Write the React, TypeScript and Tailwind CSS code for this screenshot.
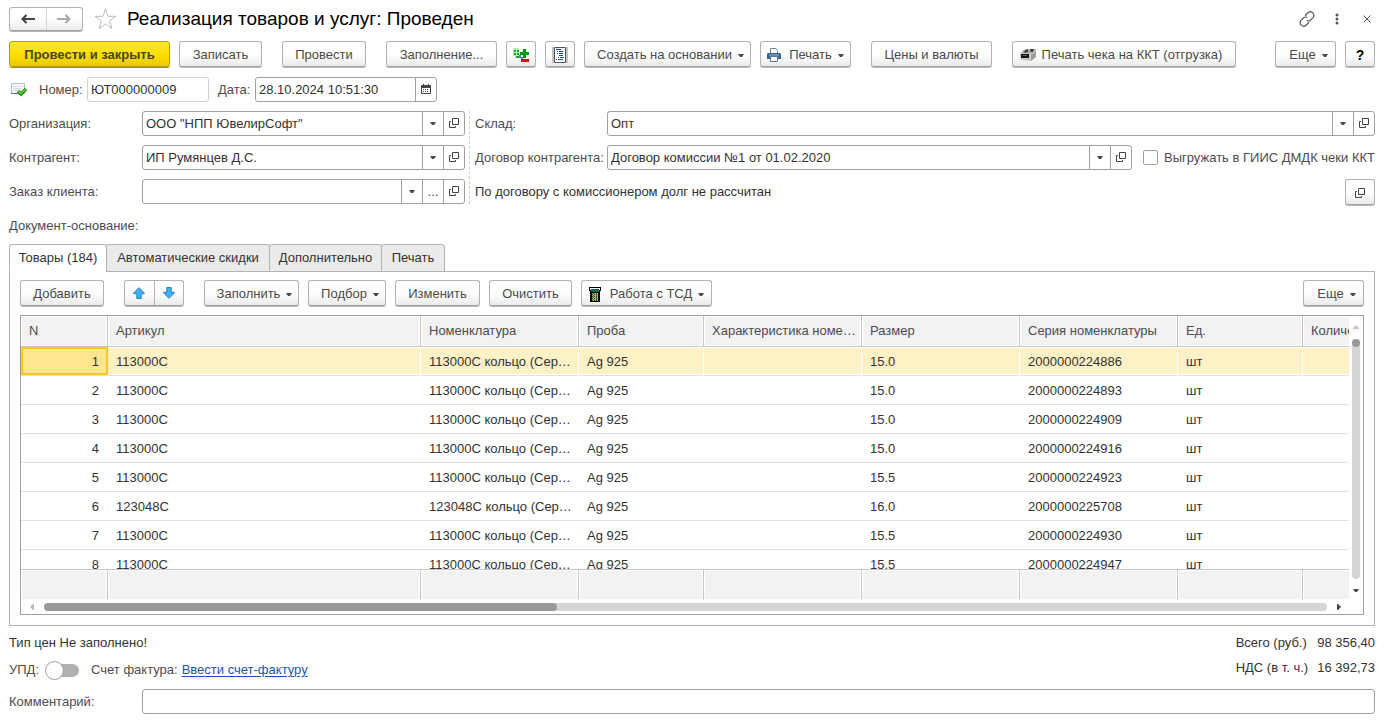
import React from "react";
import clsx from "clsx";

const columns = [
  { title: "N", width: "w-[87px]" },
  { title: "Артикул", width: "w-[313px]" },
  { title: "Номенклатура", width: "w-[158px]" },
  { title: "Проба", width: "w-[125px]" },
  { title: "Характеристика номе…", width: "w-[158px]" },
  { title: "Размер", width: "w-[158px]" },
  { title: "Серия номенклатуры", width: "w-[158px]" },
  { title: "Ед.", width: "w-[125px]" },
  { title: "Количество", width: "w-[120px]" },
];

const rows = [
  { article: "113000С", size: "15.0", series: "2000000224886" },
  { article: "113000С", size: "15.0", series: "2000000224893" },
  { article: "113000С", size: "15.0", series: "2000000224909" },
  { article: "113000С", size: "15.0", series: "2000000224916" },
  { article: "113000С", size: "15.5", series: "2000000224923" },
  { article: "123048С", size: "16.0", series: "2000000225708" },
  { article: "113000С", size: "15.5", series: "2000000224930" },
  { article: "113000С", size: "15.5", series: "2000000224947" },
];

const tabs = [
  { title: "Товары (184)", width: "w-[98px]" },
  { title: "Автоматические скидки", width: "w-[164px]" },
  { title: "Дополнительно", width: "w-[113px]" },
  { title: "Печать", width: "w-[64px]" },
];

const raised =
  "border border-[#b3b3b3] border-b-[#a0a0a0] bg-linear-to-b from-white from-50% to-[#ebebeb] shadow-[0_1px_0_#b8b8b8]";

function Button({
  className,
  children,
  ...props
}: React.ButtonHTMLAttributes<HTMLButtonElement>) {
  return (
    <button
      type="button"
      className={clsx(
        "flex h-[26px] shrink-0 items-center justify-center rounded-[3px] pt-0.5 whitespace-nowrap text-[#4a4a4a]",
        raised,
        className,
      )}
      {...props}
    >
      {children}
    </button>
  );
}

function Caret() {
  return (
    <svg width="6" height="3" viewBox="0 0 6 3" className="shrink-0">
      <path d="M0 0h6L4 3H2z" fill="#4a4a4a" />
    </svg>
  );
}

function OpenIcon() {
  return (
    <svg width="10" height="10" viewBox="0 0 10 10" fill="none" stroke="#444">
      <path d="M3.5.5h6v6h-6zM2 3.5H.5v6h6V8" />
    </svg>
  );
}

function ArrowIcon({ right, color }: { right?: boolean; color: string }) {
  return (
    <svg width="14" height="10" viewBox="0 0 14 10" className={clsx(right && "rotate-180")}>
      <path d="M5.5 1 1.500 5l4 4M1.500 5H14" fill="none" stroke={color} strokeWidth="2.200" />
    </svg>
  );
}

function MoveIcon({ down }: { down?: boolean }) {
  return (
    <svg width="12" height="12" viewBox="0 0 12 12" className={clsx(down && "rotate-180")}>
      <path d="M6 .7 11.3 6v.7H8.2v4.8H3.8V6.7H.7V6z" fill="#3fb2f2" stroke="#2b7fb8" />
    </svg>
  );
}

function AddRemoveIcon() {
  return (
    <svg width="16" height="16" viewBox="0 0 16 16">
      <path d="M0 1h6v10H2V9H0z" fill="#b5efb5" />
      <path d="M1 3h2v2H1zM4 3h2v2H4zM1 6h2v2H1zM4 6h2v2H4zM3 9h3v2H3z" fill="#18a52c" />
      <path d="M10 2h3v3h3v3h-3v3h-3V8H7V5h3z" fill="#009a08" />
      <path d="M6 8h2v2h2v2H8v-1H6z" fill="#3e83d0" />
      <path d="M8 12h8v3H8z" fill="#f00014" />
    </svg>
  );
}

function SheetIcon() {
  return (
    <svg width="16" height="16" viewBox="0 0 16 16">
      <path d="M0 0h2v16H0zM14 0h2v16h-2z" fill="#c4c4c4" />
      <path d="M2.500.5h11v15h-11z" fill="#fff" stroke="#555" />
      <path
        d="M4 2.500h5M5 4.500h1m1 0h4M5 6.500h1m1 0h4M7 8.500h4M6 10.500h1m1 0h4M4 12.500h1m1 0h5"
        stroke="#0b5583"
      />
    </svg>
  );
}

function PrinterIcon() {
  return (
    <svg width="14" height="14" viewBox="0 0 14 14">
      <path d="M3.500 5.500v-5h5l2 2v3" fill="#fff" stroke="#6c8096" />
      <path d="M1 5h12l1 1v5H0V6z" fill="#386590" />
      <path d="M2 7h10" stroke="#9cb6cf" />
      <path d="M3.500 8.500h7v5h-7z" fill="#fff" stroke="#5a7896" />
    </svg>
  );
}

function CashRegisterIcon() {
  return (
    <svg width="16" height="13" viewBox="0 0 16 13">
      <path d="M0 5 4 1l12-1v7l-5 5-10-1z" fill="#c9c6bd" />
      <path d="M4 1 15 0l-3 4H1z" fill="#aaa8a2" />
      <path d="m5 1 3-1v3L4 4zM10 0h4l-1 3h-2z" fill="#3d4249" />
      <path d="M1 5h8v4H1z" fill="#151515" />
      <path d="m11 6 5-4v6l-5 4z" fill="#a09d94" />
      <path d="M3 6.500h4" stroke="#666" />
    </svg>
  );
}

function TerminalIcon() {
  return (
    <svg width="12" height="15" viewBox="0 0 12 15">
      <path d="M0 0h12v4h-1v11H1V4H0z" fill="#000" />
      <path d="M1 1h10v2H1z" fill="#fff" />
      <path d="M2 2h8v3H2z" fill="#036b4e" />
      <path d="M3 6h6v8H3z" fill="#a3b878" />
      <path d="M3 7.500h6M3 9.500h6M3 11.500h6M3 13.500h6" stroke="#30421f" strokeDasharray="1 1" />
      <path d="M4.500 6v8M7.500 6v8" stroke="#53683c" strokeDasharray="1 1" />
    </svg>
  );
}

function PostedIcon() {
  return (
    <svg width="16" height="14" viewBox="0 0 16 14">
      <path d="M.5.5h13v10H.5z" fill="#f5f8fa" stroke="#b4c0ca" />
      <path d="M0 10.500h10" stroke="#5c7488" />
      <path d="M2 3.500h10M2 5.500h9M2 7.500h5" stroke="#d3dce3" />
      <path d="m7 8 3 3 5-5" fill="none" stroke="#2c8b1c" strokeWidth="3.400" />
      <path d="m7.300 8 2.700 2.600L14.600 6" fill="none" stroke="#5cc83b" strokeWidth="1.400" />
    </svg>
  );
}

function CalendarIcon() {
  return (
    <svg width="10" height="10" viewBox="0 0 10 10">
      <path d="M.5 1.500h9v8h-9z" fill="none" stroke="#444" />
      <path d="M0 2h10v2H0zM2 0h1v2H2zM7 0h1v2H7z" fill="#444" />
      <path d="M2 5.500h6M2 7.500h6" stroke="#444" strokeDasharray="1 1" />
    </svg>
  );
}

const picker =
  "flex w-[21px] shrink-0 items-center justify-center border-l border-[#a0a0a0] pb-px leading-none text-[#444]";

function Field({
  id,
  label,
  labelClass,
  value,
  dots,
  children,
}: {
  id: string;
  label: string;
  labelClass: string;
  value: string;
  dots?: boolean;
  children?: React.ReactNode;
}) {
  return (
    <div className="flex h-[25px] items-center">
      <label htmlFor={id} className={clsx("shrink-0 whitespace-nowrap text-[#4f4b50]", labelClass)}>
        {label}
      </label>
      <div className="flex h-[25px] min-w-0 flex-1 rounded-[3px] border border-[#a0a0a0]">
        <input
          id={id}
          defaultValue={value}
          className="min-w-0 flex-1 bg-transparent px-[3px] outline-none"
        />
        <button type="button" aria-label="Выбрать" className={picker}>
          <Caret />
        </button>
        {dots && (
          <button type="button" className={picker}>
            ...
          </button>
        )}
        <button type="button" aria-label="Открыть" className={picker}>
          <OpenIcon />
        </button>
      </div>
      {children}
    </div>
  );
}

function Header() {
  return (
    <header className="flex h-6 items-center">
      <div className={clsx("flex h-6 w-[74px] shrink-0 rounded-[3px]", raised)}>
        <button type="button" aria-label="Назад" className="flex flex-1 items-center justify-center">
          <ArrowIcon color="#444" />
        </button>
        <button
          type="button"
          aria-label="Вперед"
          className="flex flex-1 items-center justify-center border-l border-[#d4d4d4]"
        >
          <ArrowIcon right color="#aaa" />
        </button>
      </div>
      <button type="button" aria-label="В избранное" className="ml-[11px]">
        <svg width="23" height="22" viewBox="0 0 23 22">
          <path
            d="m11.500 1.200 2.600 7.100h7.700l-6.200 4.600 2.300 7.600-6.400-4.600-6.400 4.600 2.300-7.600L1.200 8.300h7.700z"
            fill="none"
            stroke="#b4bcc4"
          />
        </svg>
      </button>
      <h1 className="ml-[10px] flex-1 text-[19px] text-black">
        Реализация товаров и услуг: Проведен
      </h1>
      <div className="flex items-center">
        <button type="button" aria-label="Ссылка">
          <svg
            width="16"
            height="16"
            viewBox="0 0 16 16"
            fill="none"
            stroke="#555"
            strokeWidth="1.200"
            strokeLinecap="round"
          >
            <path d="M6.400 4.300 9 1.800c3.200-2.900 7.800 1.500 5 4.900l-2.600 2.500c-1 .8-2.200 1-3.200.5" />
            <path d="M9.600 11.700 7 14.200c-3.200 2.900-7.800-1.500-5-4.900l2.600-2.500c1-.8 2.200-1 3.200-.5" />
          </svg>
        </button>
        <button type="button" aria-label="Меню" className="ml-5">
          <svg width="4" height="12" viewBox="0 0 4 12" fill="#555">
            <circle cx="2" cy="2" r="1.500" />
            <circle cx="2" cy="6" r="1.500" />
            <circle cx="2" cy="10" r="1.500" />
          </svg>
        </button>
        <button type="button" aria-label="Закрыть" className="mr-1 ml-6">
          <svg width="8" height="8" viewBox="0 0 8 8" stroke="#555">
            <path d="m.5.5 7 7M7.500.5l-7 7" />
          </svg>
        </button>
      </div>
    </header>
  );
}

function CommandBar() {
  return (
    <div className="mt-[10px] flex items-center">
      <button
        type="button"
        className="h-[26px] w-[161px] shrink-0 rounded-[3px] border border-[#b59f00] bg-linear-to-b from-[#ffe62e] via-[#ffdf00] to-[#e8cb00] pt-0.5 font-bold whitespace-nowrap text-[#4a4420] shadow-[0_1px_0_#a89400]"
      >
        Провести и закрыть
      </button>
      <Button className="ml-[9px] w-[83px]">Записать</Button>
      <Button className="ml-5 w-[84px]">Провести</Button>
      <Button className="ml-5 w-[111px]">Заполнение...</Button>
      <Button aria-label="Изменить состав" className="ml-[9px] w-[30px]">
        <AddRemoveIcon />
      </Button>
      <Button aria-label="Отчет" className="ml-[9px] w-[30px]">
        <SheetIcon />
      </Button>
      <Button className="ml-[9px] w-[167px] gap-[6px] pl-[6px]">
        Создать на основании
        <Caret />
      </Button>
      <Button className="ml-[9px] w-[91px]">
        <PrinterIcon />
        <span className="mr-[6px] ml-2">Печать</span>
        <Caret />
      </Button>
      <Button className="ml-5 w-[121px]">Цены и валюты</Button>
      <Button className="ml-5 w-[224px] gap-[6px] pr-[6px]">
        <CashRegisterIcon />
        Печать чека на ККТ (отгрузка)
      </Button>
      <Button className="ml-auto w-[61px] gap-[6px] pl-[6px]">
        Еще
        <Caret />
      </Button>
      <Button className="ml-[9px] w-[30px] text-sm font-bold text-black">?</Button>
    </div>
  );
}

function DocumentForm() {
  return (
    <>
      <div className="mt-[10px] flex h-[25px] items-center pl-0.5">
        <PostedIcon />
        <label htmlFor="number" className="ml-3 w-12 whitespace-nowrap text-[#4f4b50]">
          Номер:
        </label>
        <input
          id="number"
          readOnly
          value="ЮТ000000009"
          className="h-[25px] w-[122px] rounded-[3px] border border-[#d0d0d0] px-[3px] outline-none"
        />
        <label htmlFor="date" className="ml-[9px] w-[37px] whitespace-nowrap text-[#4f4b50]">
          Дата:
        </label>
        <div className="flex h-[25px] w-[182px] rounded-[3px] border border-[#a0a0a0]">
          <input
            id="date"
            defaultValue="28.10.2024 10:51:30"
            className="min-w-0 flex-1 px-[3px] outline-none"
          />
          <button type="button" aria-label="Календарь" className={picker}>
            <CalendarIcon />
          </button>
        </div>
      </div>

      <div className="mt-[9px] flex">
        <div className="flex w-[456px] shrink-0 flex-col gap-[9px]">
          <Field id="org" label="Организация:" labelClass="w-[133px]" value={'ООО "НПП ЮвелирСофт"'} />
          <Field id="partner" label="Контрагент:" labelClass="w-[133px]" value="ИП Румянцев Д.С." />
          <Field id="order" label="Заказ клиента:" labelClass="w-[133px]" value="" dots />
        </div>
        <div className="ml-1 border-l border-dashed border-[#cfcfcf]" />
        <div className="ml-[5px] flex min-w-0 flex-1 flex-col gap-[9px]">
          <Field id="stock" label="Склад:" labelClass="w-[132px]" value="Опт" />
          <Field
            id="contract"
            label="Договор контрагента:"
            labelClass="w-[132px]"
            value="Договор комиссии №1 от 01.02.2020"
          >
            <label className="ml-[11px] flex shrink-0 items-center gap-[6px] whitespace-nowrap text-[#4f4b50]">
              <input
                type="checkbox"
                className="size-[15px] appearance-none rounded-[2px] border border-[#a0a0a0] bg-white checked:bg-[#8a8a8a]"
              />
              Выгружать в ГИИС ДМДК чеки ККТ
            </label>
          </Field>
          <div className="flex h-[25px] items-center justify-between">
            <span>По договору с комиссионером долг не рассчитан</span>
            <Button aria-label="Открыть расчеты" className="w-[30px]">
              <OpenIcon />
            </Button>
          </div>
        </div>
      </div>
      <p className="mt-[13px] text-[#4f4b50]">Документ-основание:</p>
    </>
  );
}

function Columns() {
  return (
    <colgroup>
      {columns.map((column) => (
        <col key={column.title} className={column.width} />
      ))}
    </colgroup>
  );
}

function GoodsTable() {
  return (
    <div className="mt-[9px] border border-[#a0a0a0]">
      <div className="flex">
        <div className="min-w-0 flex-1 overflow-hidden">
          <div className="h-[253px] overflow-hidden">
            <table className="w-[1402px] table-fixed border-separate border-spacing-0">
              <Columns />
              <thead>
                <tr className="h-[31px]">
                  {columns.map((column) => (
                    <th
                      key={column.title}
                      className="border-r border-b border-[#c6c6c6] bg-[#f2f2f2] pl-2 text-left font-normal whitespace-nowrap text-[#4f4b50] shadow-[inset_0_0_0_1px_#fff]"
                    >
                      {column.title}
                    </th>
                  ))}
                </tr>
              </thead>
              <tbody>
                {rows.map((row, i) => {
                  const cells = [
                    row.article,
                    `${row.article} кольцо (Сер…`,
                    "Ag 925",
                    "",
                    row.size,
                    row.series,
                    "шт",
                    "",
                  ];
                  return (
                    <tr key={row.series} className="h-[29px]">
                      <td
                        className={clsx(
                          "border-b border-[#e2e2e2] pt-0.5 pr-[9px] text-right",
                          i === 0 && "bg-[#ffe58f] shadow-[inset_0_0_0_2px_#f9c626]",
                        )}
                      >
                        {i + 1}
                      </td>
                      {cells.map((cell, j) => (
                        <td
                          key={j}
                          className={clsx(
                            "border-b border-[#e2e2e2] pt-0.5 pl-2 whitespace-nowrap",
                            i === 0 &&
                              "border-r border-r-white bg-[#fef1c5] shadow-[inset_0_1px_0_#fff,inset_0_-1px_0_#fff]",
                          )}
                        >
                          {cell}
                        </td>
                      ))}
                    </tr>
                  );
                })}
              </tbody>
            </table>
          </div>
          {/* totals band under the rows */}
          <table aria-hidden="true" className="w-[1402px] table-fixed border-separate border-spacing-0">
            <Columns />
            <tbody>
              <tr className="h-[31px]">
                {columns.map((column) => (
                  <td
                    key={column.title}
                    className="border-t border-r border-[#c6c6c6] bg-[#f2f2f2] shadow-[inset_0_0_0_1px_#fff]"
                  />
                ))}
              </tr>
            </tbody>
          </table>
        </div>
        <div className="flex w-[14px] shrink-0 flex-col items-center pt-[9px] pb-2">
          <svg width="6" height="4" viewBox="0 0 6 4">
            <path d="M3 0 6 3v1H0V3z" fill="#c4c4c4" />
          </svg>
          <div className="my-[10px] w-2 flex-1 rounded-full bg-[#d5d5d5]">
            <div className="size-2 rounded-full bg-[#999]" />
          </div>
          <Caret />
        </div>
      </div>
      <div className="flex h-[14px] items-center pr-[22px] pl-[9px]">
        <svg width="4" height="6" viewBox="0 0 4 6">
          <path d="M0 3 3 0h1v6H3z" fill="#bbb" />
        </svg>
        <div className="mx-[10px] h-2 flex-1 rounded-full bg-[#d5d5d5]">
          <div className="h-2 w-2/5 rounded-full bg-[#999]" />
        </div>
        <svg width="4" height="6" viewBox="0 0 4 6">
          <path d="M4 3 1 0H0v6h1z" fill="#444" />
        </svg>
      </div>
    </div>
  );
}

function Goods() {
  return (
    <section>
      <div role="tablist" className="relative mt-[9px] flex">
        {tabs.map((tab, i) => (
          <button
            key={tab.title}
            type="button"
            role="tab"
            aria-selected={i === 0}
            className={clsx(
              "h-7 rounded-t-[3px] border border-[#b3b3b3] whitespace-nowrap",
              tab.width,
              i === 0 ? "border-b-white bg-white" : "-ml-px bg-[#ebebeb]",
            )}
          >
            {tab.title}
          </button>
        ))}
      </div>
      <div className="-mt-px border border-[#b3b3b3] px-[10px] pt-2 pb-[10px]">
        <div className="flex items-center">
          <Button className="w-[84px]">Добавить</Button>
          <div className={clsx("ml-5 flex h-[26px] w-[60px] shrink-0 rounded-[3px]", raised)}>
            <button
              type="button"
              aria-label="Переместить вверх"
              className="flex flex-1 items-center justify-center"
            >
              <MoveIcon />
            </button>
            <button
              type="button"
              aria-label="Переместить вниз"
              className="flex flex-1 items-center justify-center border-l border-[#b3b3b3]"
            >
              <MoveIcon down />
            </button>
          </div>
          <Button className="ml-5 w-[95px] gap-[6px] pl-[6px]">
            Заполнить
            <Caret />
          </Button>
          <Button className="ml-[9px] w-[78px] gap-[6px] pl-[6px]">
            Подбор
            <Caret />
          </Button>
          <Button className="ml-[9px] w-[85px]">Изменить</Button>
          <Button className="ml-[9px] w-[83px]">Очистить</Button>
          <Button className="ml-[9px] w-[131px]">
            <TerminalIcon />
            <span className="mr-[6px] ml-[9px]">Работа с ТСД</span>
            <Caret />
          </Button>
          <Button className="ml-auto w-[61px] gap-[6px] pl-[6px]">
            Еще
            <Caret />
          </Button>
        </div>
        <GoodsTable />
      </div>
    </section>
  );
}

function Footer() {
  return (
    <footer>
      <div className="mt-2 flex justify-between">
        <div>
          <p>Тип цен Не заполнено!</p>
          <div className="mt-2 flex items-center text-[#4f4b50]">
            <label htmlFor="upd" className="w-9">
              УПД:
            </label>
            <span className="relative flex h-5 w-[34px] items-center">
              <span className="ml-2 h-[13px] flex-1 rounded-full bg-[#b0b0b0]" />
              <input
                id="upd"
                type="checkbox"
                role="switch"
                className="absolute left-0 size-[19px] appearance-none rounded-full border border-[#a0a0a0] bg-white checked:left-4"
              />
            </span>
            <span className="ml-3">Счет фактура:</span>
            <a href="#invoice" className="ml-1 text-[#1a55b5] underline underline-offset-2">
              Ввести счет-фактуру
            </a>
          </div>
        </div>
        <dl className="grid grid-cols-[auto_auto] content-start gap-x-[9px] gap-y-[7px]">
          <dt>Всего (руб.)</dt>
          <dd>98 356,40</dd>
          <dt>НДС (в т. ч.)</dt>
          <dd className="text-right">16 392,73</dd>
        </dl>
      </div>
      <div className="mt-[9px] flex h-[25px] items-center">
        <label htmlFor="comment" className="w-[133px] shrink-0 text-[#4f4b50]">
          Комментарий:
        </label>
        <input
          id="comment"
          className="h-[25px] min-w-0 flex-1 rounded-[3px] border border-[#a0a0a0] px-[3px] outline-none"
        />
      </div>
    </footer>
  );
}

export default function App() {
  return (
    <main className="bg-white pt-[7px] pr-[17px] pb-[10px] pl-[9px] font-['Liberation_Sans',Arial,sans-serif] text-[13px] leading-[18px] text-[#333]">
      <Header />
      <CommandBar />
      <DocumentForm />
      <Goods />
      <Footer />
    </main>
  );
}
